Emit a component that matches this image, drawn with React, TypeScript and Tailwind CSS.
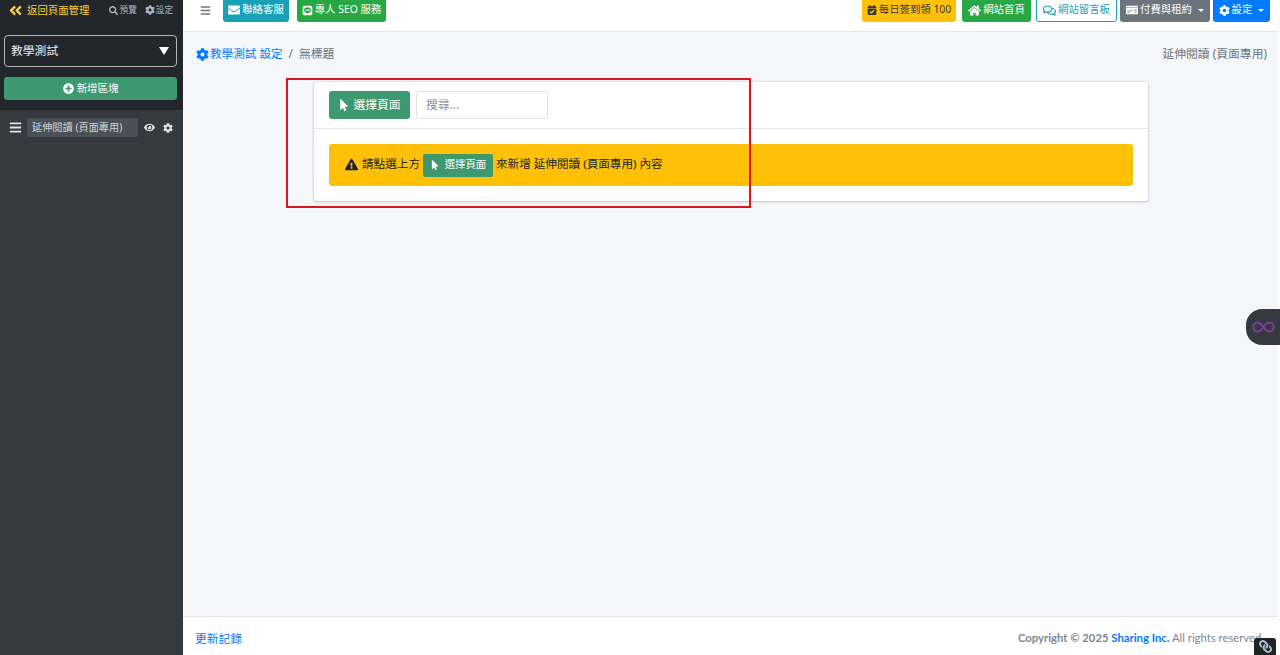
import React from 'react';
import {
  FaAngleDoubleLeft,
  FaBars,
  FaCalendarCheck,
  FaCog,
  FaEnvelope,
  FaExclamationTriangle,
  FaEye,
  FaHome,
  FaLine,
  FaLink,
  FaMoneyCheck,
  FaMousePointer,
  FaPlusCircle,
  FaRegComments,
  FaSearch,
} from 'react-icons/fa';

function Sidebar() {
  return (
    <aside className="flex h-full w-[183px] shrink-0 flex-col bg-[#343a40] shadow-[2px_0_6px_rgba(0,0,0,0.2)]">
      <div className="h-[110px] bg-[#23272b] px-[4px]">
        <div className="flex h-[21px] items-center pl-[4px] pr-[6px]">
          <FaAngleDoubleLeft className="text-[15px] text-[#f7d038]" />
          <span className="ml-[4px] text-[10.4px] text-[#f7d038]">返回頁面管理</span>
          <span className="ml-auto flex items-center gap-[2px] text-[8.6px] text-[#adb5bd]">
            <FaSearch className="text-[9px]" />預覽
          </span>
          <span className="ml-[8px] flex items-center gap-[1px] text-[8.6px] text-[#adb5bd]">
            <FaCog className="text-[10px]" />設定
          </span>
        </div>
        <div className="mt-[14px] flex h-[32px] w-[173px] items-center justify-between rounded-[4px] border border-[#adb5bd] pl-[6px] pr-[7px] text-[11.8px] text-[#e9ecef]">
          教學測試
          <span className="h-0 w-0 border-x-[5px] border-t-[8px] border-x-transparent border-t-white" />
        </div>
        <button className="mt-[10px] flex h-[23px] w-[173px] items-center justify-center gap-[3px] rounded-[3px] bg-[#3f9970] text-[10.4px] text-white">
          <FaPlusCircle className="text-[11px]" />新增區塊
        </button>
      </div>
      <div className="flex h-[35px] items-center pl-[9px] text-[#dee2e6]">
        <FaBars className="text-[13px]" />
        <span className="ml-[5px] flex h-[19px] w-[111px] items-center rounded-[2px] bg-[#495057] pl-[5px] text-[10.2px] text-[#ced4da]">
          延伸閱讀 (頁面專用)
        </span>
        <FaEye className="ml-[6px] text-[11px]" />
        <FaCog className="ml-[8px] text-[10px]" />
      </div>
    </aside>
  );
}

function TopNav() {
  const btn = 'flex h-[24px] items-center gap-[2px] rounded-[3px] text-[10.4px] text-white';
  return (
    <nav className="flex h-[32px] shrink-0 items-end overflow-hidden border-b border-[#e5e7eb] bg-white pb-[9px]">
      <FaBars className="mb-[6px] ml-[17px] text-[11px] text-[#6c757d]" />
      <div className={`${btn} ml-[12px] w-[66px] justify-center bg-[#17a2b8]`}>
        <FaEnvelope className="text-[12px]" />聯絡客服
      </div>
      <div className={`${btn} ml-[8px] w-[89px] justify-center bg-[#28a745]`}>
        <FaLine className="text-[11px]" />專人 SEO 服務
      </div>
      <div className={`${btn} ml-auto w-[94px] justify-center bg-[#ffc107] !text-[#343a40]`}>
        <FaCalendarCheck className="text-[10px]" />每日簽到領 100
      </div>
      <div className={`${btn} ml-[6px] w-[69px] justify-center bg-[#28a745]`}>
        <FaHome className="text-[13px]" />網站首頁
      </div>
      <div className={`${btn} ml-[5px] w-[81px] justify-center border border-[#17a2b8] !text-[#17a2b8]`}>
        <FaRegComments className="text-[13px]" />網站留言板
      </div>
      <div className={`${btn} ml-[3px] w-[90px] justify-center bg-[#6c757d]`}>
        <FaMoneyCheck className="text-[12px]" />付費與租約
        <span className="ml-[4px] h-0 w-0 border-x-[3px] border-t-[3px] border-x-transparent border-t-white" />
      </div>
      <div className={`${btn} ml-[3px] mr-[8px] w-[57px] justify-center bg-[#007bff]`}>
        <FaCog className="text-[11px]" />設定
        <span className="ml-[4px] h-0 w-0 border-x-[3px] border-t-[3px] border-x-transparent border-t-white" />
      </div>
    </nav>
  );
}

function SelectButton({ small }: { small?: boolean }) {
  if (small) {
    return (
      <span className="mx-[3px] mt-[2px] inline-flex h-[23px] w-[70px] items-center justify-center gap-[5px] rounded-[2px] bg-[#3f9970] text-[10.4px] text-white">
        <FaMousePointer className="text-[10px]" />選擇頁面
      </span>
    );
  }
  return (
    <button className="flex h-[28px] w-[81px] items-center justify-center gap-[3px] rounded-[3px] bg-[#3f9970] text-[11.8px] text-white">
      <FaMousePointer className="text-[12px]" />選擇頁面
    </button>
  );
}

export default function App() {
  return (
    <div className="relative flex h-[655px] w-[1280px] overflow-hidden bg-white font-['Noto_Sans','Noto_Sans_CJK_TC',sans-serif]">
      <Sidebar />
      <div className="flex h-full min-w-0 flex-1 flex-col pr-[2px]">
        <TopNav />
        <main className="flex flex-1 flex-col bg-[#f4f6f9]">
          <div className="flex h-[44px] items-center justify-between pl-[13px] pr-[11px] text-[11.8px] text-[#6c757d]">
            <div className="flex items-center">
              <FaCog className="mr-[1px] text-[13px] text-[#007bff]" />
              <span className="text-[11.6px] text-[#007bff]">教學測試 設定</span>
              <span className="mx-[6px]">/</span>
              無標題
            </div>
            <span>延伸閱讀 (頁面專用)</span>
          </div>
          <section className="ml-[131px] mt-[6px] h-[119px] w-[834px] rounded-[3px] bg-white shadow-[0_0_2px_rgba(0,0,0,0.2),0_1px_3px_rgba(0,0,0,0.15)]">
            <div className="flex h-[47px] items-center gap-[6px] border-b border-[#e5e7eb] px-[15px]">
              <SelectButton />
              <div className="flex h-[28px] w-[132px] items-center rounded-[3px] border border-[#dee2e6] pl-[9px] text-[11.8px] text-[#868e96]">
                搜尋...
              </div>
            </div>
            <div className="px-[15px] pt-[15px]">
              <div className="flex h-[42px] items-center rounded-[3px] bg-[#ffc107] pb-[2px] pl-[16px] text-[11.6px] text-[#212529]">
                <FaExclamationTriangle className="mr-[4px] text-[13px]" />
                請點選上方
                <SelectButton small />
                來新增 延伸閱讀 (頁面專用) 內容
              </div>
            </div>
          </section>
          <footer className="mt-auto flex h-[39px] items-center justify-between border-t border-[#e5e7eb] bg-white pl-[12px] pr-[14px] pt-[5px] text-[11.8px]">
            <span className="text-[#007bff]">更新記錄</span>
            <span className="font-['Lato',sans-serif] text-[11.3px] text-[#7d8791]">
              <b>Copyright © 2025 </b>
              <b className="text-[#007bff]">Sharing Inc.</b> All rights reserved.
            </span>
          </footer>
        </main>
      </div>

      {/* annotation box drawn over the screenshot */}
      <div className="absolute left-[286px] top-[78px] h-[130px] w-[465px] border-2 border-[#e0131a]" />

      {/* floating widgets */}
      <div className="absolute right-0 top-[309px] flex h-[36px] w-[34px] items-center rounded-l-[16px] bg-[#343a40] pl-[6px]">
        <svg width="23" height="12" viewBox="0 0 23 12" fill="none" stroke="#7b3f98" strokeWidth="2">
          <path d="M11.5 6C9.5 3 8 1.500 5.800 1.500a4.500 4.500 0 0 0 0 9c2.200 0 3.700-1.500 5.700-4.500s3.500-4.500 5.700-4.500a4.500 4.500 0 0 1 0 9c-2.200 0-3.700-1.500-5.700-4.500z" />
        </svg>
      </div>
      <div className="absolute bottom-0 right-[4px] flex h-[17px] w-[22px] items-center justify-center rounded-t-[3px] bg-[#1f2326] text-[#a9c1d0]">
        <FaLink className="-scale-x-100 text-[13px]" />
      </div>
    </div>
  );
}
